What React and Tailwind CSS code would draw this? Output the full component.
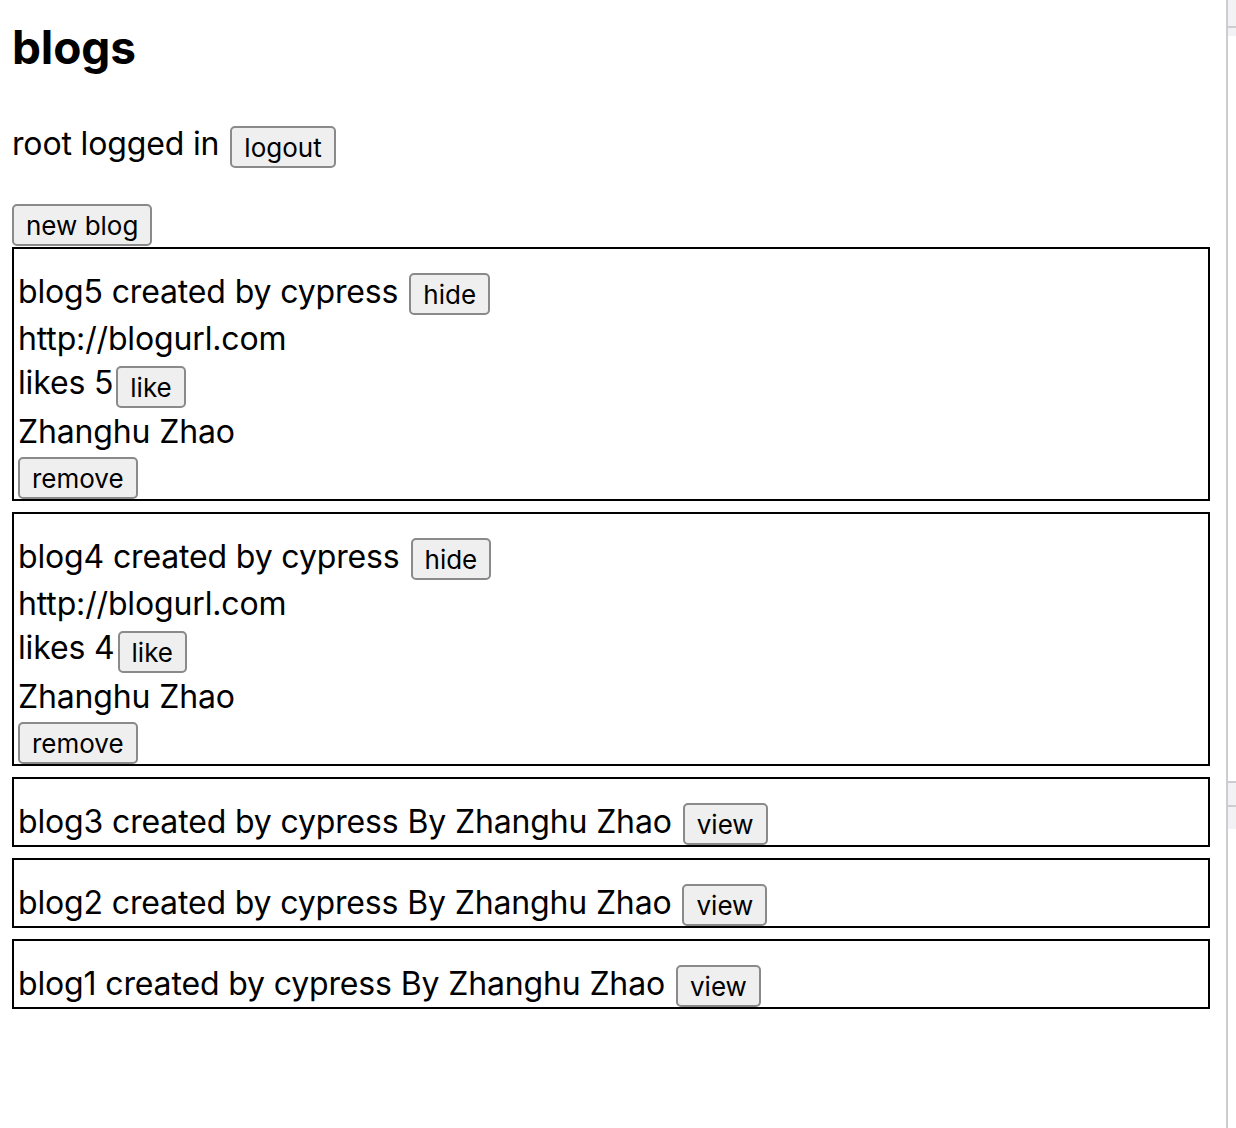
const blogs = [
  { id: 5, title: 'blog5 created by cypress', url: 'http://blogurl.com', likes: 5, author: 'Zhanghu Zhao', expanded: true },
  { id: 4, title: 'blog4 created by cypress', url: 'http://blogurl.com', likes: 4, author: 'Zhanghu Zhao', expanded: true },
  { id: 3, title: 'blog3 created by cypress', url: 'http://blogurl.com', likes: 3, author: 'Zhanghu Zhao', expanded: false },
  { id: 2, title: 'blog2 created by cypress', url: 'http://blogurl.com', likes: 2, author: 'Zhanghu Zhao', expanded: false },
  { id: 1, title: 'blog1 created by cypress', url: 'http://blogurl.com', likes: 1, author: 'Zhanghu Zhao', expanded: false },
]

function Btn({ children, className = '' }) {
  return (
    <button
      type="button"
      className={`flex h-[42px] shrink-0 items-center rounded-[5px] border-2 border-[#8a8a8a] bg-[#efefef] px-[12px] pt-[2px] text-[26px] leading-none tracking-normal text-black ${className}`}
    >
      {children}
    </button>
  )
}

function Blog({ blog }) {
  if (!blog.expanded) {
    return (
      <div className="mb-[11px] border-2 border-black pl-[4px] pt-[20px]">
        <div className="flex h-[46px] items-start">
          <span className="leading-[46px]">
            {blog.title} By {blog.author}
          </span>
          <Btn className="ml-[11px] mt-[4px]">view</Btn>
        </div>
      </div>
    )
  }

  return (
    <div className="mb-[11px] border-2 border-black pl-[4px] pt-[20px]">
      <div className="flex h-[47px] items-start">
        <span className="leading-[46px]">{blog.title}</span>
        <Btn className="ml-[11px] mt-[4px]">hide</Btn>
      </div>
      <div className="h-[41px] leading-[46px]">{blog.url}</div>
      <div className="flex h-[49px] items-start">
        <span className="pt-[3px] leading-[46px]">likes {blog.likes}</span>
        <Btn className="ml-[3px] mt-[9px]">like</Btn>
      </div>
      <div className="h-[46px] pt-[3px] leading-[46px]">{blog.author}</div>
      <div className="h-[47px] pt-[5px]">
        <Btn>remove</Btn>
      </div>
    </div>
  )
}

export default function App() {
  return (
    <div className="flex min-h-[1128px] bg-white text-[32px] tracking-[-0.15px] text-black" style={{ fontFamily: 'Inter, "Liberation Sans", sans-serif' }}>
      <main className="w-[1222px] px-[12px]">
        <h2 className="pt-[19px] text-[46px] font-bold leading-[56px]">blogs</h2>

        <div className="mt-[45px] flex h-[48px] items-start">
          <span className="pt-[1px] leading-[46px]">root logged in</span>
          <Btn className="ml-[11px] mt-[6px]">logout</Btn>
        </div>

        <div className="mt-[36px]">
          <Btn>new blog</Btn>
        </div>

        <div className="mt-[1px]">
          {blogs.map((blog) => (
            <Blog key={blog.id} blog={blog} />
          ))}
        </div>
      </main>

      <div className="w-[4px]" />
      <aside className="flex w-[10px] flex-col border-l-2 border-[#cdcdd1]">
        <div className="h-[26px] bg-[#f2f2f4]" />
        <div className="h-[10px] border-t-2 border-[#cdcdd1] bg-[#f2f2f4]" />
        <div className="h-[745px]" />
        <div className="h-[24px] border-t-2 border-[#cdcdd1] bg-[#f2f2f4]" />
        <div className="h-[24px] border-t-2 border-[#cdcdd1] bg-[#f2f2f4]" />
      </aside>
    </div>
  )
}
